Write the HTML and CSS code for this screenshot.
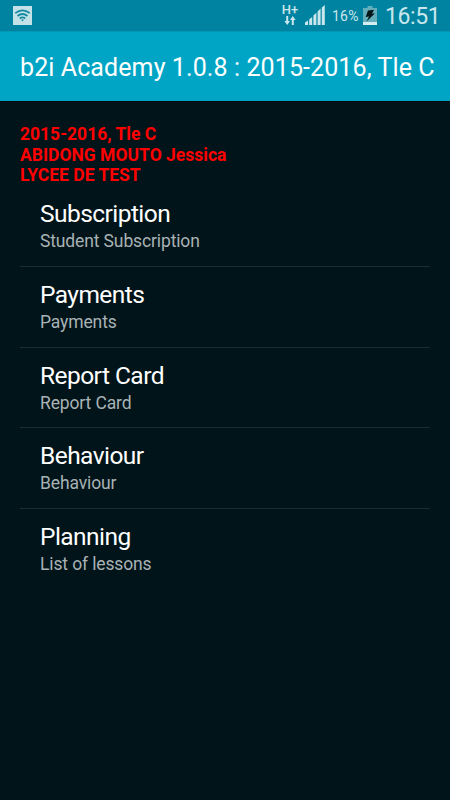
FILE: index.html
```
<!DOCTYPE html>
<html lang="en">
<head>
    <meta charset="UTF-8">
    <meta name="viewport" content="width=device-width, initial-scale=1.0">
    <title>b2i Academy</title>
    <link rel="stylesheet" href="styles.css">
</head>
<body>
    <div class="status-bar">
        <svg class="wifi" width="19" height="19" viewBox="0 0 19 19">
            <rect width="19" height="19" fill="#c3e2e7"/>
            <g fill="none" stroke="#168aa2" stroke-width="1.7">
                <path d="M2.2 7.2Q9.5 1.4 16.8 7.2"/>
                <path d="M4.5 10Q9.5 6 14.5 10"/>
                <path d="M6.7 12.5Q9.5 10.3 12.3 12.5"/>
            </g>
            <path d="M8 13.6h3l-1.5 1.8z" fill="#168aa2"/>
        </svg>
        <div class="network">
            <span>H+</span>
            <svg width="12" height="9" viewBox="0 0 12 9" fill="#c9e7ec">
                <path d="M2.2 0h2v5h1.8L3.2 9 .4 5h1.8z"/>
                <path d="M7.8 9h2V4h1.8L8.8 0 6 4h1.8z"/>
            </svg>
        </div>
        <svg class="signal" width="20" height="20" viewBox="0 0 20 20" fill="#c9e7ec">
            <path d="M0 17.5l3-2V20H0zM4.2 14.5l3-2.5v8h-3zM8.4 10.5l3-2.8V20h-3zM12.6 6.5l3-3V20h-3zM16.8 2.5l3-2.5v20h-3z"/>
        </svg>
        <span class="percent">16%</span>
        <svg class="battery" width="14" height="19" viewBox="0 0 14 19">
            <path d="M4.5 0h5v2H14v17H0V2h4.5z" fill="#63aebb"/>
            <path d="M0 16h14v3H0z" fill="#d5edf0"/>
            <path d="M5 4.5l6-.8-2 4.1 3-.5-8.5 8.2L6 10.5l-3.3.5z" fill="#061518"/>
        </svg>
        <span class="clock">16:51</span>
    </div>

    <div class="action-bar">
        <h1>b2i Academy 1.0.8 : 2015-2016, Tle C</h1>
    </div>

    <div class="content">
        <div class="student">
            <p>2015-2016, Tle C</p>
            <p>ABIDONG MOUTO Jessica</p>
            <p>LYCEE DE TEST</p>
        </div>

        <ul class="menu">
            <li>
                <h2>Subscription</h2>
                <p>Student Subscription</p>
            </li>
            <li>
                <h2>Payments</h2>
                <p>Payments</p>
            </li>
            <li>
                <h2>Report Card</h2>
                <p>Report Card</p>
            </li>
            <li>
                <h2>Behaviour</h2>
                <p>Behaviour</p>
            </li>
            <li>
                <h2>Planning</h2>
                <p>List of lessons</p>
            </li>
        </ul>
    </div>
</body>
</html>
```

FILE: styles.css
```
* {
    box-sizing: border-box;
    margin: 0;
    padding: 0;
}
body {
    height: 800px;
    overflow: hidden;
    background: #00141a;
    color: #fff;
    font-family: Roboto, sans-serif;
}
.status-bar {
    display: flex;
    align-items: flex-start;
    height: 31px;
    padding-left: 13px;
    background: #0083a0;
    color: #c9e7ec;
}
.wifi { margin-top: 6px; }
.network {
    display: flex;
    flex-direction: column;
    align-items: center;
    width: 18px;
    margin: 4px 0 0 249px;
}
.network span {
    font-size: 13px;
    line-height: 12px;
    font-weight: 500;
}
.signal { margin: 5px 0 0 6px; }
.percent {
    width: 31px;
    margin-top: 7px;
    margin-left: 7px;
    font-size: 14px;
    line-height: 18px;
    letter-spacing: 0.2px;
}
.battery { margin-top: 6px; }
.clock {
    margin: 3px 0 0 8px;
    font-size: 23px;
    line-height: 28px;
    letter-spacing: -0.4px;
    white-space: nowrap;
}
.action-bar {
    display: flex;
    align-items: center;
    height: 70px;
    padding: 2px 0 0 20px;
    background: #00a5c5;
    border-top: 1px solid #0096b4;
}
.action-bar h1 {
    font-size: 25px;
    font-weight: 400;
    letter-spacing: 0.1px;
    white-space: nowrap;
}
.content {
    border-top: 1px solid #000a0d;
    padding: 22px 20px 0;
}
.student {
    color: #f00;
    font-size: 17.5px;
    font-weight: 700;
    line-height: 20.5px;
}
.menu { list-style: none; }
.menu li {
    height: 80.8px;
    padding: 12px 20px 0;
    border-bottom: 1px solid #1d2c31;
}
.menu li:first-child {
    height: 81.4px;
    padding-top: 12.5px;
}
.menu li:last-child { border-bottom: none; }
.menu h2 {
    font-size: 24.5px;
    font-weight: 400;
    line-height: 31px;
    letter-spacing: -0.55px;
}
.menu p {
    color: #a9b2b4;
    font-size: 17.5px;
    line-height: 24px;
    letter-spacing: -0.13px;
}
```
